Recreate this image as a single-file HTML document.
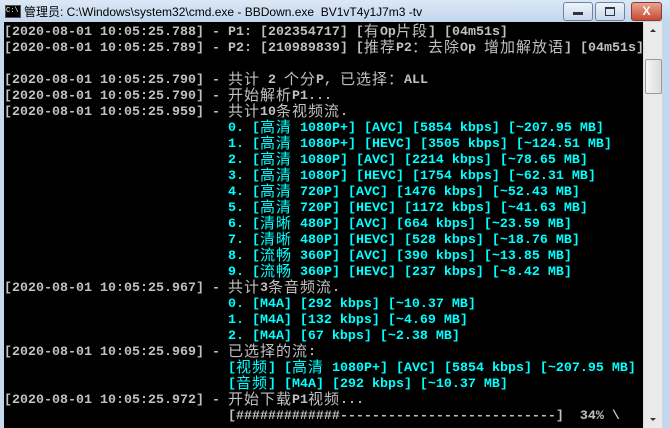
<!DOCTYPE html>
<html><head><meta charset="utf-8"><style>
body{margin:0;width:670px;height:428px;overflow:hidden;background:#c5d8ee;position:relative;font-family:"Liberation Sans","Noto Sans CJK SC",sans-serif}
.tb{position:absolute;left:0;top:0;width:670px;height:22px;background:linear-gradient(#dbe8f6,#c3d6ec)}
.title{position:absolute;left:24px;top:3px;font-size:12px;color:#000;white-space:nowrap}
.ico{position:absolute;left:5px;top:5px;width:14px;height:11px;background:#000;border:1px solid #555;color:#fff;font:7px "Liberation Mono",monospace;line-height:10px}
.btn{position:absolute;top:2px;height:17px;border:1px solid #6d83a2;border-radius:3px;background:linear-gradient(#eef3fa,#c9d8eb)}
.con{position:absolute;left:4px;top:22px;width:639px;height:406px;background:#000}
.sb{position:absolute;left:643px;top:22px;width:18px;height:406px;background:#eaeaea;border-left:1px solid #ddd}
.w{position:absolute;left:0;top:2px}
.l{position:absolute;left:4px;height:16px;line-height:16px;white-space:pre;font:bold 13.33px "Liberation Mono","Noto Sans CJK SC",monospace;color:#c0c0c0}
.c{color:#00ffff}
.z{display:inline-block;position:relative;top:-2px;height:16px;line-height:16px;vertical-align:top;font-family:"Noto Sans CJK SC",sans-serif;font-weight:normal;font-size:15px;letter-spacing:1px}
</style></head><body>
<div class="tb"></div>
<div class="ico">C:\</div>
<div class="title">管理员: C:\Windows\system32\cmd.exe - BBDown.exe&nbsp; BV1vT4y1J7m3 -tv</div>
<div class="btn" style="left:563px;width:28px"><div style="position:absolute;left:9px;top:9px;width:10px;height:3px;background:#334"></div></div>
<div class="btn" style="left:595px;width:28px"><div style="position:absolute;left:9px;top:4px;width:8px;height:6px;border:1px solid #334;border-top-width:2px"></div></div>
<div class="btn" style="left:631px;width:29px;background:linear-gradient(#e8a593,#c74a34);border-color:#8a3a2e;color:#fff;font:bold 12px 'Liberation Sans';text-align:center;line-height:17px">X</div>
<div class="con"></div>
<div class="sb">
<div style="position:absolute;left:6px;top:7px;border:3px solid transparent;border-bottom:3px solid #333;border-top:0"></div>
<div style="position:absolute;left:1px;top:37px;width:15px;height:33px;border:1px solid #999;border-radius:2px;background:linear-gradient(90deg,#f4f4f4,#dcdcdc)"></div>
<div style="position:absolute;left:6px;top:396px;border:3px solid transparent;border-top:3px solid #333;border-bottom:0"></div>
</div>
<div class="w">
<div class="l" style="top:23px">[2020-08-01 10:05:25.788] - P1: [202354717] [<span class="z">有</span>Op<span class="z">片段</span>] [04m51s]</div>
<div class="l" style="top:39px">[2020-08-01 10:05:25.789] - P2: [210989839] [<span class="z">推荐</span>P2<span class="z">：去除</span>Op <span class="z">增加解放语</span>] [04m51s]</div>
<div class="l" style="top:71px">[2020-08-01 10:05:25.790] - <span class="z">共计</span> 2 <span class="z">个分</span>P, <span class="z">已选择：</span>ALL</div>
<div class="l" style="top:87px">[2020-08-01 10:05:25.790] - <span class="z">开始解析</span>P1...</div>
<div class="l" style="top:103px">[2020-08-01 10:05:25.959] - <span class="z">共计</span>10<span class="z">条视频流</span>.</div>
<div class="l c" style="top:119px">                            0. [<span class="z">高清</span> 1080P+] [AVC] [5854 kbps] [~207.95 MB]</div>
<div class="l c" style="top:135px">                            1. [<span class="z">高清</span> 1080P+] [HEVC] [3505 kbps] [~124.51 MB]</div>
<div class="l c" style="top:151px">                            2. [<span class="z">高清</span> 1080P] [AVC] [2214 kbps] [~78.65 MB]</div>
<div class="l c" style="top:167px">                            3. [<span class="z">高清</span> 1080P] [HEVC] [1754 kbps] [~62.31 MB]</div>
<div class="l c" style="top:183px">                            4. [<span class="z">高清</span> 720P] [AVC] [1476 kbps] [~52.43 MB]</div>
<div class="l c" style="top:199px">                            5. [<span class="z">高清</span> 720P] [HEVC] [1172 kbps] [~41.63 MB]</div>
<div class="l c" style="top:215px">                            6. [<span class="z">清晰</span> 480P] [AVC] [664 kbps] [~23.59 MB]</div>
<div class="l c" style="top:231px">                            7. [<span class="z">清晰</span> 480P] [HEVC] [528 kbps] [~18.76 MB]</div>
<div class="l c" style="top:247px">                            8. [<span class="z">流畅</span> 360P] [AVC] [390 kbps] [~13.85 MB]</div>
<div class="l c" style="top:263px">                            9. [<span class="z">流畅</span> 360P] [HEVC] [237 kbps] [~8.42 MB]</div>
<div class="l" style="top:279px">[2020-08-01 10:05:25.967] - <span class="z">共计</span>3<span class="z">条音频流</span>.</div>
<div class="l c" style="top:295px">                            0. [M4A] [292 kbps] [~10.37 MB]</div>
<div class="l c" style="top:311px">                            1. [M4A] [132 kbps] [~4.69 MB]</div>
<div class="l c" style="top:327px">                            2. [M4A] [67 kbps] [~2.38 MB]</div>
<div class="l" style="top:343px">[2020-08-01 10:05:25.969] - <span class="z">已选择的流</span>:</div>
<div class="l c" style="top:359px">                            [<span class="z">视频</span>] [<span class="z">高清</span> 1080P+] [AVC] [5854 kbps] [~207.95 MB]</div>
<div class="l c" style="top:375px">                            [<span class="z">音频</span>] [M4A] [292 kbps] [~10.37 MB]</div>
<div class="l" style="top:391px">[2020-08-01 10:05:25.972] - <span class="z">开始下载</span>P1<span class="z">视频</span>...</div>
<div class="l" style="top:407px">                            [#############---------------------------]  34% \</div>
</div>
</body></html>
